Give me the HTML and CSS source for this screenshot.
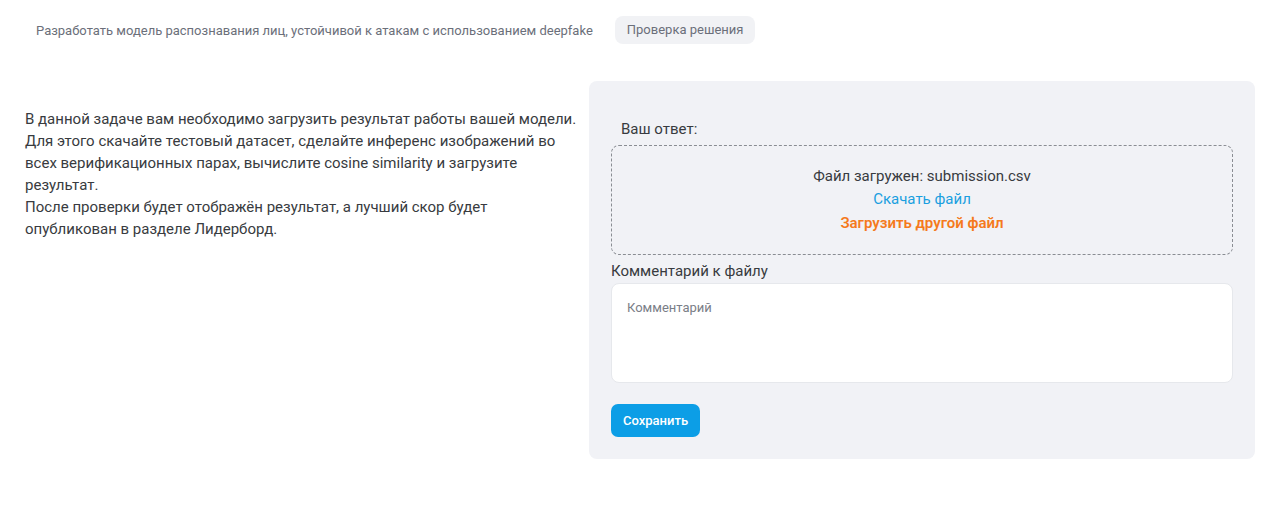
FILE: index.html
```html
<!DOCTYPE html>
<html lang="ru">
<head>
<meta charset="utf-8">
<link rel="stylesheet" href="styles.css">
</head>
<body>
<nav class="crumbs">
  <span class="crumb">Разработать модель распознавания лиц, устойчивой к атакам с использованием deepfake</span>
  <span class="crumb crumb-active">Проверка решения</span>
</nav>
<main class="layout">
  <section class="desc">
    <p>В данной задаче вам необходимо загрузить результат работы вашей модели. Для этого скачайте тестовый датасет, сделайте инференс изображений во всех верификационных парах, вычислите cosine similarity и загрузите результат.<br>После проверки будет отображён результат, а лучший скор будет опубликован в разделе Лидерборд.</p>
  </section>
  <section class="panel">
    <div class="answer-label">Ваш ответ:</div>
    <div class="dropzone">
      <div class="file-name">Файл загружен: submission.csv</div>
      <a class="link-download">Скачать файл</a>
      <a class="link-reupload">Загрузить другой файл</a>
    </div>
    <label class="comment-label">Комментарий к файлу</label>
    <div class="comment-box"><span class="placeholder">Комментарий</span></div>
    <button class="save-btn">Сохранить</button>
  </section>
</main>
</body>
</html>
```
FILE: styles.css
```css
* { box-sizing: border-box; }
body {
  margin: 0;
  background: #ffffff;
  font-family: Roboto, "Noto Sans", sans-serif;
  color: #333840;
}
.crumbs {
  display: flex;
  align-items: center;
  gap: 22px;
  padding: 16px 0 0 36px;
  height: 44px;
}
.crumb {
  font-size: 13px;
  color: #6b6f7a;
}
.crumb-active {
  background: #f1f2f5;
  border-radius: 8px;
  padding: 0 12px;
  height: 28px;
  line-height: 28px;
}
.layout {
  display: flex;
  align-items: flex-start;
  padding: 37px 25px 0 25px;
  gap: 12px;
}
.desc {
  width: 552px;
  padding-top: 27px;
}
.desc p {
  margin: 0;
  font-size: 15px;
  line-height: 22px;
  color: #383b40;
}
.panel {
  flex: 1;
  background: #f1f2f6;
  border-radius: 8px;
  padding: 38px 22px 22px 22px;
  height: 378px;
}
.answer-label {
  font-size: 15px;
  line-height: 20px;
  padding-left: 10px;
  margin-bottom: 6px;
  color: #383b40;
}
.dropzone {
  border: 1px dashed #8a8d93;
  border-radius: 8px;
  height: 110px;
  display: flex;
  flex-direction: column;
  align-items: center;
  padding-top: 19px;
}
.file-name {
  font-size: 15px;
  line-height: 23px;
  color: #383b40;
}
.link-download {
  font-size: 15px;
  line-height: 23px;
  color: #1a9fe0;
}
.link-reupload {
  font-size: 15px;
  line-height: 25px;
  font-weight: 600;
  color: #f57a1c;
}
.comment-label {
  display: block;
  font-size: 15px;
  line-height: 20px;
  margin-top: 6px;
  margin-bottom: 2px;
  color: #383b40;
}
.comment-box {
  background: #ffffff;
  border: 1px solid #e6e8ec;
  border-radius: 8px;
  height: 100px;
  padding: 13px 15px;
}
.placeholder {
  font-size: 13px;
  color: #7a7e87;
}
.save-btn {
  display: block;
  margin-top: 21px;
  height: 33px;
  padding: 0 12px;
  border: none;
  border-radius: 7px;
  background: #0c9ee6;
  color: #ffffff;
  font-family: Roboto, "Noto Sans", sans-serif;
  font-size: 13px;
  font-weight: 500;
}
```
